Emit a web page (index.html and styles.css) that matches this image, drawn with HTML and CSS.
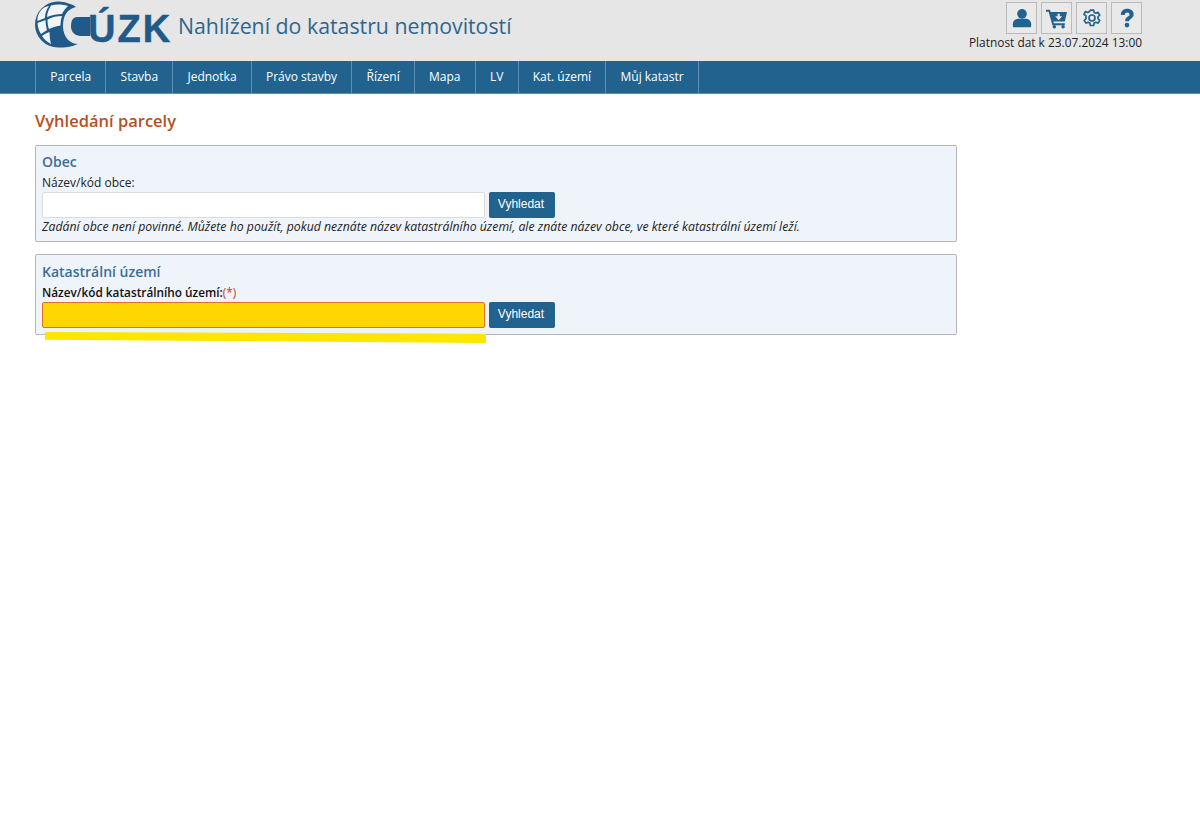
FILE: index.html
```html
<!DOCTYPE html>
<html lang="cs">
<head>
<meta charset="utf-8">
<title>Vyhledání parcely</title>
<link rel="stylesheet" href="styles.css">
</head>
<body>
<header class="top">
  <div class="brand">
    <svg class="globe" viewBox="35 0 57 50" width="57" height="50" aria-hidden="true">
      <path fill="#1f5a88" d="M73 5C67 2.500 62 1.500 58 1.500a23 23 0 1 0 0 46c7 0 14-.5 20-3.500-8 0-15-7-15-18 0-10 4-17 13-19Z"/>
      <path fill="#f2f4f6" d="M45 7c-5 3-8 8-7.500 14l7.500-3c0-4 1-8 4-12ZM51 5.500c-2 3.500-4 7.500-4 11.500 5-2 10-3 15-3 2-4 4-6 6-8-6-2-12-2-17-.5ZM37.500 23c.5 5 1.500 8 3.500 11l6-4c-1-4-1.500-7-1.500-10ZM47.500 19.500c0 3.500.5 7.500 1.500 9.500 4-2 8-3 11.500-3.500 0-3.500.5-6.500 1.500-9.500-5 0-10 1-14.500 3.500ZM42 36c2 3 5 6 9 8-1-4-1.500-9-1.500-12-2.500 1-5.500 2-7.500 4Z"/>
      <path fill="#1f5a88" d="M77 17h13v19H81c-6 0-10-4-10-9.500 0-6 2-9.500 6-9.500Z"/>
    </svg>
    <span class="letters">ÚZK</span>
    <span class="title">Nahlížení do katastru nemovitostí</span>
  </div>
  <div class="tools">
    <div class="icons">
      <a class="ico" href="#"><svg viewBox="0 0 24 24" width="20" height="20"><circle cx="12" cy="7" r="5.800" fill="#22628f"/><path fill="#22628f" d="M1 21.500v-2c0-4 3-6.500 6.500-6.500h9c3.500 0 6.500 2.500 6.500 6.500v2c0 .8-.7 1.500-1.500 1.500h-19C1.700 23 1 22.300 1 21.500Z"/></svg></a>
      <a class="ico" href="#"><svg viewBox="0 0 26 24" width="23" height="21"><path fill="#22628f" d="M1 2h4.500l.8 2.500H25l-2.500 11H9.500l.5 2h12.500v2.200H8.300L4 4.200H1Z"/><path fill="#e6e6e6" d="M14.200 6.500h2.600v3h2.700L15.500 14l-4-4.500h2.700Z"/><circle cx="10.500" cy="21.500" r="2" fill="#22628f"/><circle cx="20.500" cy="21.500" r="2" fill="#22628f"/></svg></a>
      <a class="ico" href="#"><svg viewBox="0 0 24 24" width="20" height="20" fill="none" stroke="#22628f" stroke-width="2" stroke-linejoin="round"><circle cx="12" cy="12" r="3.600"/><path d="M10 2.500h4l.6 2.800 2.100 1 2.600-1.100 2 3.400-2.100 1.900v2.400l2.100 1.900-2 3.400-2.600-1.100-2.100 1-.6 2.900h-4l-.6-2.900-2.100-1-2.600 1.100-2-3.400 2.100-1.900V9.500L2.300 7.600l2-3.400 2.600 1.100 2.100-1Z"/></svg></a>
      <a class="ico" href="#"><svg viewBox="0 0 24 24" width="20" height="20" fill="#22628f"><path d="M4.500 8C5 3.500 8 1 12.300 1c4.500 0 7.700 2.700 7.700 6.500 0 2.600-1.300 4-3.200 5.300-1.600 1.100-2.300 1.700-2.300 3.200H9.800c0-3 1-4.200 3-5.500 1.400-.9 2.200-1.600 2.200-2.800 0-1.300-1.100-2.200-2.700-2.200-1.700 0-2.700 1-3 2.900Z"/><circle cx="12" cy="20.500" r="2.800"/></svg></a>
    </div>
    <div class="validity">Platnost dat k 23.07.2024 13:00</div>
  </div>
</header>
<nav class="menu">
  <a href="#">Parcela</a><a href="#">Stavba</a><a href="#">Jednotka</a><a href="#">Právo stavby</a><a href="#">Řízení</a><a href="#">Mapa</a><a href="#">LV</a><a href="#">Kat. území</a><a href="#">Můj katastr</a>
</nav>
<main class="content">
  <h1>Vyhledání parcely</h1>
  <section class="panel">
    <h2>Obec</h2>
    <label for="obec">Název/kód obce:</label>
    <div class="row"><input id="obec" type="text"><button type="button">Vyhledat</button></div>
    <p class="hint">Zadání obce není povinné. Můžete ho použít, pokud neznáte název katastrálního území, ale znáte název obce, ve které katastrální území leží.</p>
  </section>
  <section class="panel panel-ku">
    <h2>Katastrální území</h2>
    <label class="req" for="ku">Název/kód katastrálního území:<span class="star">(*)</span></label>
    <div class="row"><input id="ku" class="invalid" type="text"><button type="button">Vyhledat</button></div>
    <div class="marker"></div>
  </section>
</main>
</body>
</html>
```
FILE: styles.css
```css
* { box-sizing: border-box; }
html, body { margin: 0; padding: 0; background: #fff; }
body { font-family: "Open Sans", "Noto Sans", sans-serif; font-size: 12px; color: #222; height: 827px; overflow: hidden; }

.top { height: 61px; background: #e6e6e6; display: flex; justify-content: space-between; padding: 0 58px 0 35px; }
.brand { display: flex; align-items: flex-start; height: 61px; }
.globe { flex: none; }
.letters { font-family: "Liberation Sans", sans-serif; font-weight: 700; font-size: 38px; line-height: 38px; margin: 10px 0 0 -4px; color: #1f5a88; letter-spacing: 2px; width: 90px; flex: none; -webkit-text-stroke: 0.5px #1f5a88; }
.title { font-size: 21.300px; line-height: 28px; margin: 12px 0 0 0; color: #2f668f; white-space: nowrap; }
.tools { display: flex; flex-direction: column; align-items: flex-end; padding-top: 2px; }
.icons { display: flex; gap: 4px; }
.ico { width: 31px; height: 32px; border: 1px solid #bbb; display: flex; align-items: center; justify-content: center; background: #e9e9e9; }
.validity { font-size: 11.900px; line-height: 16px; margin-top: 0; color: #222; }

.menu { height: 33px; background: #22628f; border-bottom: 1px solid #5c8fb3; display: flex; padding-left: 35px; }
.menu a { color: #fff; text-decoration: none; font-size: 12px; line-height: 32px; padding: 0 14.200px; border-left: 1px solid #5c8fb3; }
.menu a:last-child { border-right: 1px solid #5c8fb3; }

.content { padding: 0 0 0 35px; width: 957px; }
h1 { margin: 0; padding-top: 15px; font-size: 16.500px; line-height: 24px; font-weight: 600; color: #b5501f; height: 51px; }
.panel { background: #eff4fb; border: 1px solid #b5b5b5; border-radius: 2px; padding: 7px 6px 5px; height: 97px; margin-bottom: 12px; position: relative; }
.panel-ku { height: 81px; padding-top: 8px; }
h2 { margin: 0; font-size: 14px; line-height: 18px; font-weight: 600; color: #3c6e96; }
label { display: block; line-height: 15px; font-size: 12px; margin-top: 4px; }
.req { font-weight: 600; color: #111; font-size: 11.800px; }
.star { color: #c0392b; font-weight: 400; }
.row { display: flex; gap: 4px; margin-top: 2px; }
input { width: 443px; height: 26px; border: 1px solid #dcdcdc; border-radius: 2px; background: #fff; padding: 0 4px; }
input.invalid { background: #ffd700; border-color: #e0702a; }
button { width: 66px; height: 26px; background: #22628f; color: #fff; border: 0; border-radius: 2px; font-family: "Liberation Sans", sans-serif; font-size: 12px; padding: 0 2px 2px 0; }
.hint { margin: 0; font-style: italic; font-size: 12.270px; line-height: 17px; white-space: nowrap; color: #222; }
.marker { position: absolute; left: 9px; top: 77px; width: 441px; height: 11px; background: #ffe600; clip-path: polygon(0 0, 100% 15%, 100% 100%, 0 70%); }
```
